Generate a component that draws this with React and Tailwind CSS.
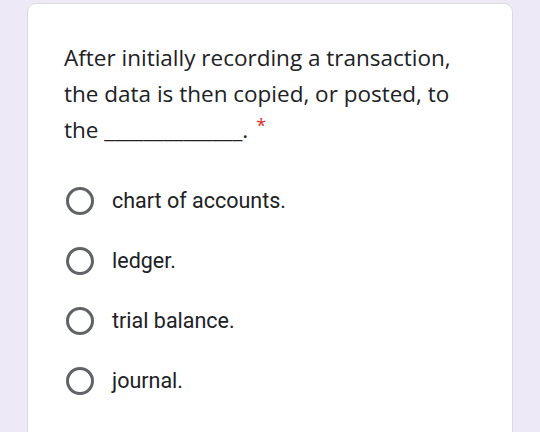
export default function App() {
  const options = ["chart of accounts.", "ledger.", "trial balance.", "journal."];
  return (
    <div className="w-[540px] h-[432px] overflow-hidden bg-[#ede9f7] pt-[3px] pl-[27px]">
      <div className="w-[486px] h-[460px] bg-white rounded-[9px] border border-[#dadce0] pt-[36px] pl-[36px]">
        <div
          className="text-[22.5px] leading-[36px] text-[#202124]"
          style={{ fontFamily: '"Open Sans", sans-serif' }}
        >
          <div>After initially recording a transaction,</div>
          <div>the data is then copied, or posted, to</div>
          <div>
            the ______________.<span className="text-[#d93025] ml-[8px] text-[18px] relative top-[-6px]">*</span>
          </div>
        </div>
        <div className="mt-[22px] flex flex-col" style={{ fontFamily: 'Roboto, sans-serif' }}>
          {options.map((o) => (
            <div key={o} className="flex items-center h-[60px]">
              <div className="w-[28px] h-[28px] rounded-full border-[3px] border-[#5f6368] ml-[2px]" />
              <span className="ml-[18px] text-[21.5px] text-[#202124]">{o}</span>
            </div>
          ))}
        </div>
      </div>
    </div>
  );
}
